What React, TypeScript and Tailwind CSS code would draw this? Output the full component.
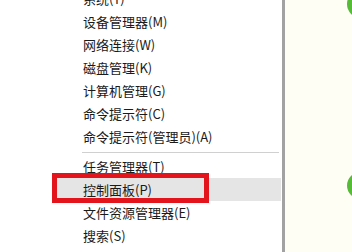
import React from 'react';

const groupA = [
  '系统(Y)',
  '设备管理器(M)',
  '网络连接(W)',
  '磁盘管理(K)',
  '计算机管理(G)',
  '命令提示符(C)',
  '命令提示符(管理员)(A)',
];

const groupB = ['任务管理器(T)', '控制面板(P)', '文件资源管理器(E)', '搜索(S)'];

function MenuItem({ label, active }: { label: string; active?: boolean }) {
  return (
    <div
      className={
        active
          ? 'h-[23px] flex items-center ml-[56px] mr-[1px] pl-[27px] bg-[#e5e5e5] text-[13px] text-[#1a1a1a]'
          : 'h-[23px] flex items-center ml-[56px] mr-[1px] pl-[27px] text-[13px] text-[#1a1a1a]'
      }
    >
      {label}
    </div>
  );
}

export default function App() {
  return (
    <div
      className="w-[352px] h-[252px] flex overflow-hidden bg-white"
      style={{ fontFamily: '"Noto Sans CJK SC", "Liberation Sans", sans-serif' }}
    >
      {/* Win+X 菜单 */}
      <div className="relative w-[282px] shrink-0 bg-white">
        <div className="flex flex-col mt-[-13px]">
          {groupA.map((l) => (
            <MenuItem key={l} label={l} />
          ))}
          <div className="h-[7px] flex items-center pl-[82px] pr-[3px]">
            <div className="h-px w-full bg-[#d0d0d0] mt-px" />
          </div>
          {groupB.map((l) => (
            <MenuItem key={l} label={l} active={l === '控制面板(P)'} />
          ))}
        </div>
        {/* 红框标注 */}
        <div className="absolute left-[52px] top-[173px] w-[157px] h-[30px] border-[5px] border-[#e3141c]" />
      </div>

      {/* 分隔边框 */}
      <div className="w-[3px] shrink-0 bg-[#a2a2a2]" />

      {/* 右侧面板 */}
      <div className="relative flex-1 bg-[#fffef4] overflow-hidden">
        <div className="absolute left-[62px] top-[-10px] w-[28px] h-[28px] rounded-full bg-[#56bb37]" />
        <div className="absolute left-[62px] top-[172px] w-[28px] h-[27px] rounded-full bg-[#56bb37]" />
      </div>
    </div>
  );
}
